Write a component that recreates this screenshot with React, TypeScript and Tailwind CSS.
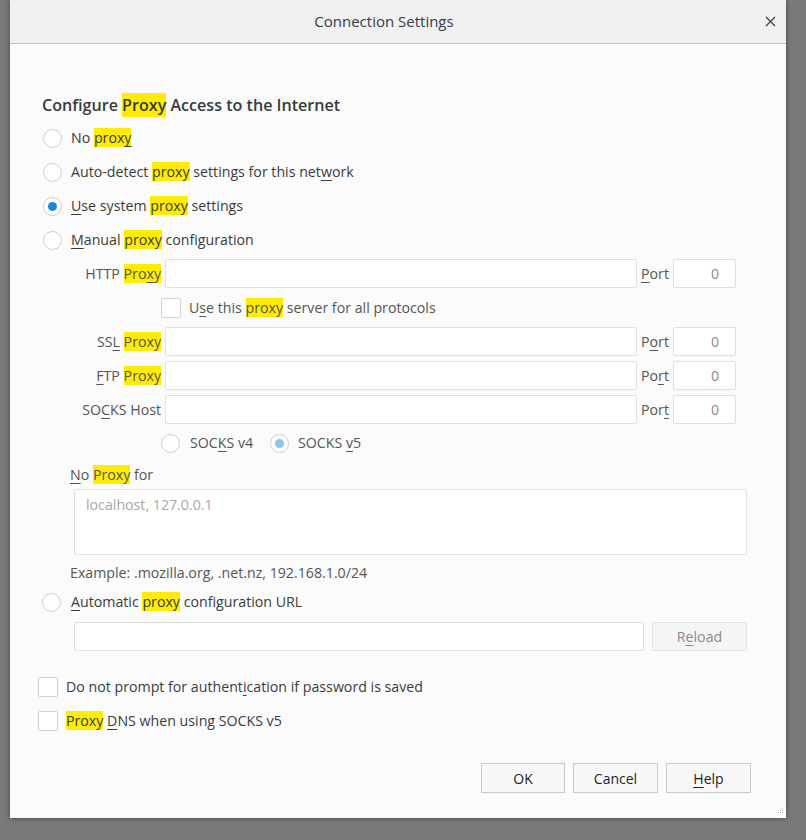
import React from "react";

const HL = ({ children }: { children: React.ReactNode }) => (
  <span className="bg-[#ffec00]">{children}</span>
);

const U = ({ children }: { children: React.ReactNode }) => (
  <span className="underline decoration-1 underline-offset-[3px]">{children}</span>
);

function Radio({ checked = false, dim = false }: { checked?: boolean; dim?: boolean }) {
  return (
    <span className="flex h-[19px] w-[19px] flex-none items-center justify-center rounded-full border border-[#cfcfcf] bg-white">
      {checked && (
        <span className={`h-[9px] w-[9px] rounded-full ${dim ? "bg-[#8ec5ea]" : "bg-[#1f86d6]"}`} />
      )}
    </span>
  );
}

function Checkbox() {
  return <span className="block h-[20px] w-[20px] flex-none rounded-[2px] border border-[#d2d2d2] bg-white" />;
}

function ProxyRow({ label, port }: { label: React.ReactNode; port: React.ReactNode }) {
  return (
    <div className="flex h-[29px] items-center">
      <div className="w-[95px] pr-[4px] text-right text-[#555]">{label}</div>
      <div className="h-[29px] w-[472px] rounded-[2px] border border-[#e0e0e0] bg-white" />
      <div className="w-[36px] pl-[4px] text-[#555]">{port}</div>
      <div className="flex h-[29px] w-[63px] items-center justify-end rounded-[2px] border border-[#e0e0e0] bg-white pr-[16px] text-[#8a8a8a]">
        0
      </div>
    </div>
  );
}

export default function App() {
  return (
    <div
      className="h-[840px] w-[806px] overflow-hidden bg-[#7a7a7a] text-[14.2px] text-[#3b3b3b]"
      style={{ fontFamily: '"Open Sans", "Noto Sans", sans-serif' }}
    >
      <div className="relative ml-[10px] flex h-[818px] w-[776px] flex-col bg-[#fbfbfb] shadow-[0_0_5px_rgba(0,0,0,0.45)]">
        {/* title bar */}
        <div className="relative flex h-[44px] flex-none items-center justify-center border-b border-[#c3c3c3] bg-[#f0f0f0] pr-[28px] text-[#333d47]">
          <span className="text-[15px]">Connection Settings</span>
          <svg className="absolute right-[10px] top-[16px]" width="11" height="11" viewBox="0 0 11 11">
            <path d="M1 1 L10 10 M10 1 L1 10" stroke="#3b4754" strokeWidth="1.4" />
          </svg>
        </div>

        <div className="flex flex-col pt-[49px]">
          <div className="flex h-[24px] items-center pl-[32px] text-[16.1px] font-semibold text-[#363b40]">
            Configure&nbsp;<HL>Proxy</HL>&nbsp;Access to the Internet
          </div>

          <div className="mt-[4px] flex flex-col pl-[33px]">
            <div className="flex h-[34px] items-center gap-[9px]">
              <Radio />
              <span>
                No <HL>prox<U>y</U></HL>
              </span>
            </div>
            <div className="flex h-[34px] items-center gap-[9px]">
              <Radio />
              <span>
                Auto-detect <HL>proxy</HL> settings for this net<U>w</U>ork
              </span>
            </div>
            <div className="flex h-[34px] items-center gap-[9px]">
              <Radio checked />
              <span>
                <U>U</U>se system <HL>proxy</HL> settings
              </span>
            </div>
            <div className="flex h-[34px] items-center gap-[9px]">
              <Radio />
              <span>
                <U>M</U>anual <HL>proxy</HL> configuration
              </span>
            </div>
          </div>

          {/* manual config */}
          <div className="mt-[2px] flex flex-col pl-[60px]">
            <ProxyRow label={<>HTTP <HL>Pro<U>x</U>y</HL></>} port={<><U>P</U>ort</>} />
            <div className="flex h-[39px] items-center gap-[8px] pl-[91px]">
              <Checkbox />
              <span className="text-[#555]">
                U<U>s</U>e this <HL>proxy</HL> server for all protocols
              </span>
            </div>
            <div className="flex flex-col gap-[5px]">
              <ProxyRow label={<>SS<U>L</U> <HL>Proxy</HL></>} port={<>P<U>o</U>rt</>} />
              <ProxyRow label={<><U>F</U>TP <HL>Proxy</HL></>} port={<>Po<U>r</U>t</>} />
              <ProxyRow label={<>SO<U>C</U>KS Host</>} port={<>Por<U>t</U></>} />
            </div>
            <div className="flex h-[38px] items-center pl-[91px] text-[#555]">
              <Radio />
              <span className="ml-[10px] w-[80px]">
                SOC<U>K</U>S v4
              </span>
              <Radio checked dim />
              <span className="ml-[9px]">
                SOCKS <U>v</U>5
              </span>
            </div>
          </div>

          <div className="flex flex-col pl-[60px] text-[#555]">
            <div className="flex h-[26px] items-center">
              <span>
                <U>N</U>o <HL>Proxy</HL> for
              </span>
            </div>
            <div className="ml-[4px] mt-[1px] h-[66px] w-[673px] rounded-[2px] border border-[#e0e0e0] bg-white px-[11px] pt-[4px] text-[#a8a8a8]">
              localhost, 127.0.0.1
            </div>
            <div className="mt-[6px] flex h-[24px] items-center">
              Example: .mozilla.org, .net.nz, 192.168.1.0/24
            </div>
          </div>

          <div className="flex h-[34px] items-center gap-[10px] pl-[32px]">
            <Radio />
            <span>
              <U>A</U>utomatic <HL>proxy</HL> configuration URL
            </span>
          </div>
          <div className="mt-[3px] flex h-[29px] items-center gap-[8px] pl-[64px]">
            <div className="h-[29px] w-[570px] rounded-[2px] border border-[#e0e0e0] bg-white" />
            <div className="flex h-[29px] w-[95px] items-center justify-center rounded-[2px] border border-[#e2e2e2] bg-[#f5f5f5] text-[#8a8a8a]">
              R<U>e</U>load
            </div>
          </div>

          <div className="mt-[19px] flex flex-col pl-[28px]">
            <div className="flex h-[34px] items-center gap-[8px]">
              <Checkbox />
              <span>
                Do not prompt for authent<U>i</U>cation if password is saved
              </span>
            </div>
            <div className="flex h-[34px] items-center gap-[8px]">
              <Checkbox />
              <span>
                <HL>Proxy</HL> <U>D</U>NS when using SOCKS v5
              </span>
            </div>
          </div>

          <div className="mt-[25px] flex justify-end gap-[8px] pr-[35px] text-[14px] text-[#1e1e1e]">
            <div className="flex h-[30px] w-[84px] items-center justify-center border border-[#cacaca] bg-[#f8f8f8]">OK</div>
            <div className="flex h-[30px] w-[85px] items-center justify-center border border-[#cacaca] bg-[#f8f8f8]">Cancel</div>
            <div className="flex h-[30px] w-[85px] items-center justify-center border border-[#cacaca] bg-[#f8f8f8]">
              <U>H</U>elp
            </div>
          </div>
        </div>

        <svg className="absolute bottom-[1px] right-[1px]" width="10" height="10" viewBox="0 0 10 10">
          <g fill="#b5b5b5">
            <rect x="7" y="1" width="1" height="1" />
            <rect x="5" y="3" width="1" height="1" />
            <rect x="7" y="3" width="1" height="1" />
            <rect x="3" y="5" width="1" height="1" />
            <rect x="5" y="5" width="1" height="1" />
            <rect x="7" y="5" width="1" height="1" />
          </g>
        </svg>
      </div>
    </div>
  );
}
